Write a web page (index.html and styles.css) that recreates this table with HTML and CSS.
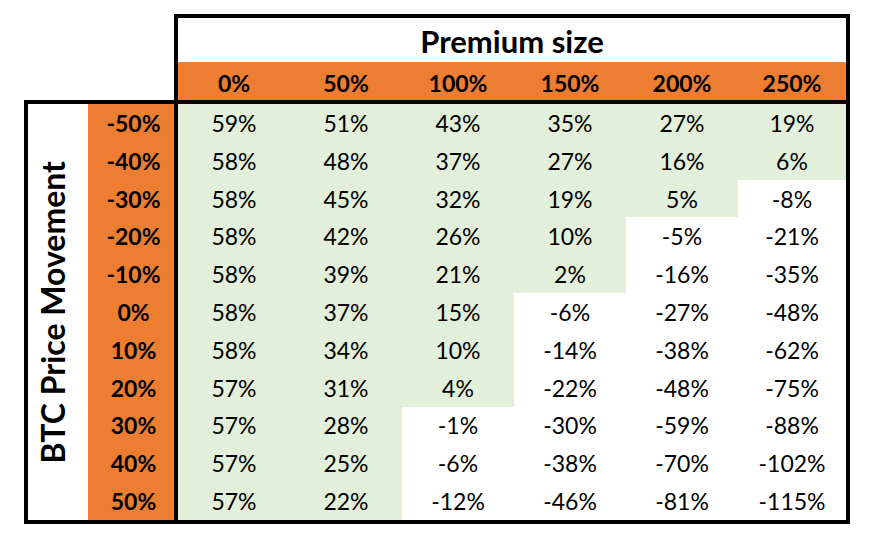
FILE: index.html
```html
<!DOCTYPE html>
<html lang="en">
<head>
<meta charset="utf-8">
<title>Premium size vs BTC Price Movement</title>
<link rel="stylesheet" href="styles.css">
</head>
<body>
<div class="sheet">
  <div class="top">
    <div class="title">Premium size</div>
    <div class="colheads">
      <div class="ch">0%</div><div class="ch">50%</div><div class="ch">100%</div><div class="ch">150%</div><div class="ch">200%</div><div class="ch">250%</div>
    </div>
  </div>
  <div class="bottom">
    <div class="axis"><span class="axis-text">BTC Price Movement</span></div>
    <div class="rowheads">
      <div class="rh">-50%</div><div class="rh">-40%</div><div class="rh">-30%</div><div class="rh">-20%</div><div class="rh">-10%</div><div class="rh">0%</div><div class="rh">10%</div><div class="rh">20%</div><div class="rh">30%</div><div class="rh">40%</div><div class="rh">50%</div>
    </div>
    <div class="data">
      <div class="c g">59%</div><div class="c g">51%</div><div class="c g">43%</div><div class="c g">35%</div><div class="c g">27%</div><div class="c g">19%</div>
      <div class="c g">58%</div><div class="c g">48%</div><div class="c g">37%</div><div class="c g">27%</div><div class="c g">16%</div><div class="c g">6%</div>
      <div class="c g">58%</div><div class="c g">45%</div><div class="c g">32%</div><div class="c g">19%</div><div class="c g">5%</div><div class="c">-8%</div>
      <div class="c g">58%</div><div class="c g">42%</div><div class="c g">26%</div><div class="c g">10%</div><div class="c">-5%</div><div class="c">-21%</div>
      <div class="c g">58%</div><div class="c g">39%</div><div class="c g">21%</div><div class="c g">2%</div><div class="c">-16%</div><div class="c">-35%</div>
      <div class="c g">58%</div><div class="c g">37%</div><div class="c g">15%</div><div class="c">-6%</div><div class="c">-27%</div><div class="c">-48%</div>
      <div class="c g">58%</div><div class="c g">34%</div><div class="c g">10%</div><div class="c">-14%</div><div class="c">-38%</div><div class="c">-62%</div>
      <div class="c g">57%</div><div class="c g">31%</div><div class="c g">4%</div><div class="c">-22%</div><div class="c">-48%</div><div class="c">-75%</div>
      <div class="c g">57%</div><div class="c g">28%</div><div class="c">-1%</div><div class="c">-30%</div><div class="c">-59%</div><div class="c">-88%</div>
      <div class="c g">57%</div><div class="c g">25%</div><div class="c">-6%</div><div class="c">-38%</div><div class="c">-70%</div><div class="c">-102%</div>
      <div class="c g">57%</div><div class="c g">22%</div><div class="c">-12%</div><div class="c">-46%</div><div class="c">-81%</div><div class="c">-115%</div>
    </div>
  </div>
</div>
</body>
</html>
```
FILE: styles.css
```css
html, body {
  margin: 0;
  background: #ffffff;
}
body {
  font-family: Lato, "Open Sans", sans-serif;
  color: #000000;
}
.sheet {
  padding: 14px 0 0 24px;
}
.top {
  margin-left: 150px;
  width: 668px;
  border: 4px solid #000000;
  border-bottom: 0;
}
.title {
  height: 44px;
  display: flex;
  align-items: center;
  justify-content: center;
  padding-top: 2px;
  box-sizing: border-box;
  font-weight: 700;
  font-size: 31px;
}
.colheads {
  height: 38px;
  background: #ed7d31;
  display: grid;
  grid-template-columns: repeat(5, 112px) 108px;
}
.ch {
  display: flex;
  align-items: center;
  justify-content: center;
  padding-top: 3px;
  font-weight: 700;
  font-size: 23px;
}
.bottom {
  display: flex;
  width: max-content;
  border: 4px solid #000000;
}
.axis {
  width: 60px;
  box-sizing: border-box;
  padding-right: 12px;
  display: flex;
  align-items: center;
  justify-content: center;
}
.axis-text {
  writing-mode: vertical-rl;
  transform: rotate(180deg);
  font-weight: 700;
  font-size: 32px;
  white-space: nowrap;
}
.rowheads {
  width: 86px;
  background: #ed7d31;
  display: grid;
  grid-template-rows: repeat(11, 1fr);
}
.rh {
  display: flex;
  align-items: center;
  justify-content: center;
  padding-left: 5px;
  font-weight: 700;
  font-size: 23px;
}
.data {
  border-left: 4px solid #000000;
  height: 416px;
  display: grid;
  grid-template-columns: repeat(5, 112px) 108px;
  grid-template-rows: repeat(11, 1fr);
}
.c {
  display: flex;
  align-items: center;
  justify-content: center;
  font-size: 23px;
}
.g {
  background: #e2efda;
}
```
